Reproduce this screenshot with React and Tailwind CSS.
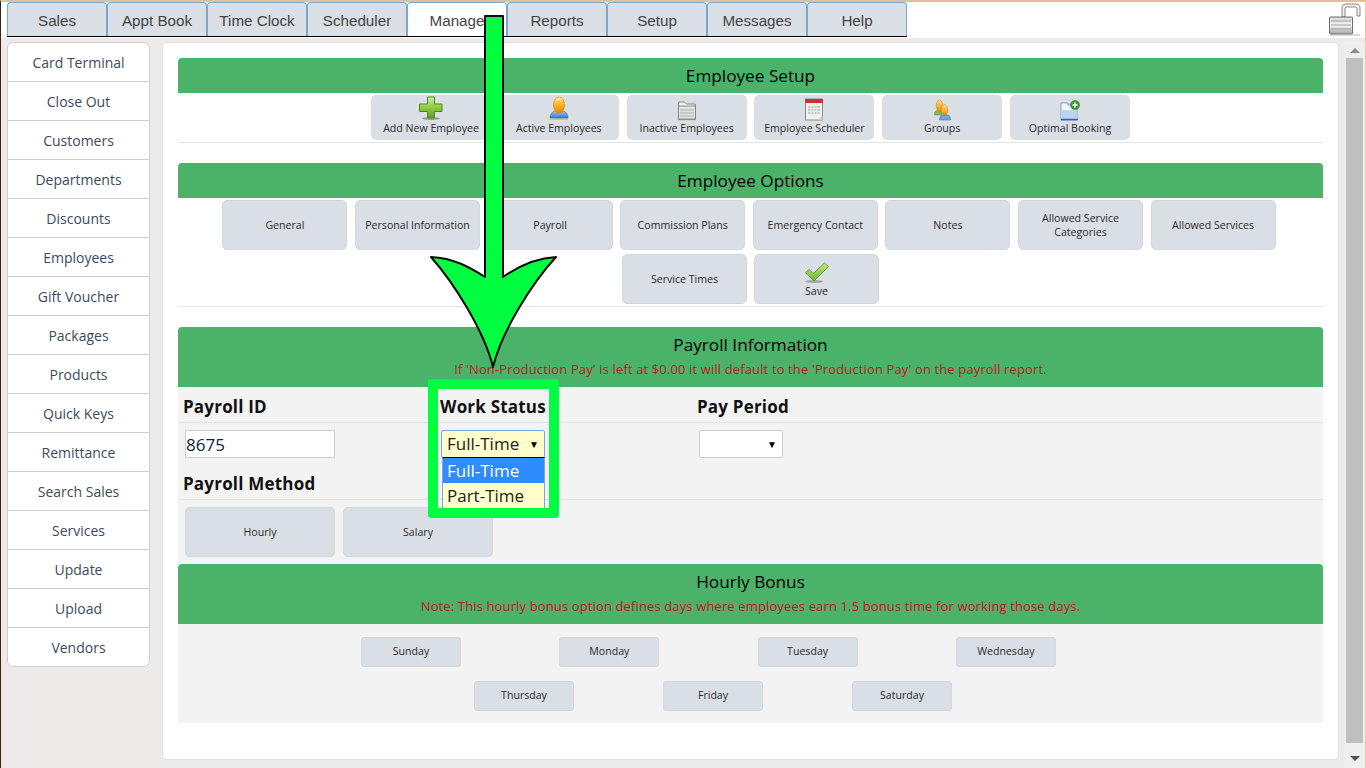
import React from 'react';

const tabs = ['Sales', 'Appt Book', 'Time Clock', 'Scheduler', 'Manage', 'Reports', 'Setup', 'Messages', 'Help'];
const sideItems = ['Card Terminal', 'Close Out', 'Customers', 'Departments', 'Discounts', 'Employees', 'Gift Voucher', 'Packages', 'Products', 'Quick Keys', 'Remittance', 'Search Sales', 'Services', 'Update', 'Upload', 'Vendors'];

const PlusIcon = () => (
  <svg width="26" height="25" viewBox="0 0 26 25">
    <defs>
      <linearGradient id="plusFill" x1="0" y1="0" x2="0" y2="1">
        <stop offset="0" stopColor="#d3ec8e" />
        <stop offset="0.55" stopColor="#8cc63f" />
        <stop offset="1" stopColor="#5e9e1e" />
      </linearGradient>
    </defs>
    <ellipse cx="13" cy="22.5" rx="9" ry="1.5" fill="#9a9a9a" />
    <path d="M9.5 1h7v7H24v7.5h-7.5V22h-7v-6.5H1.5V8h8z" fill="url(#plusFill)" stroke="#4d8a1b" />
  </svg>
);

const PersonIcon = () => (
  <svg width="20" height="25" viewBox="0 0 20 25">
    <defs>
      <linearGradient id="headFill" x1="0" y1="0" x2="0" y2="1">
        <stop offset="0" stopColor="#fff0a0" />
        <stop offset="0.5" stopColor="#ffb020" />
        <stop offset="1" stopColor="#f08000" />
      </linearGradient>
      <linearGradient id="bodyFill" x1="0" y1="0" x2="0" y2="1">
        <stop offset="0" stopColor="#9cc4f0" />
        <stop offset="1" stopColor="#3a78c8" />
      </linearGradient>
    </defs>
    <path d="M1 22c0-4 2-6 5-7h8c3 1 5 3 5 7z" fill="url(#bodyFill)" stroke="#3566a8" strokeWidth="0.6" />
    <ellipse cx="10" cy="9" rx="5.5" ry="8" fill="url(#headFill)" stroke="#d97a00" strokeWidth="0.6" />
    <rect x="1" y="22" width="18" height="1.5" fill="#a8a8a8" />
  </svg>
);

const FolderIcon = () => (
  <svg width="20" height="23" viewBox="0 0 20 23">
    <path d="M1.5 4h6l2 2h9v15h-17z" fill="#f4f4f4" stroke="#777" strokeWidth="0.8" />
    <path d="M1.5 8h17v13h-17z" fill="#e2e2e2" stroke="#777" strokeWidth="0.8" />
    <path d="M3 12h14M3 15h14M3 18h14" stroke="#b0b0b0" strokeWidth="1" />
    <rect x="1" y="21" width="18" height="1.2" fill="#8f8f8f" />
  </svg>
);

const CalendarIcon = () => (
  <svg width="20" height="23" viewBox="0 0 20 23">
    <rect x="1.5" y="1" width="17" height="21" fill="#f2f0ee" stroke="#777" strokeWidth="0.8" />
    <rect x="1" y="1" width="18" height="4" fill="#c8323a" />
    <path d="M4 8h12v8H4z" fill="#c9c9c9" />
    <path d="M4 10.5h12M4 13.5h12M7 8v8M10 8v8M13 8v8" stroke="#f4f4f4" strokeWidth="0.8" />
    <path d="M14 22l4.500-4.500V22z" fill="#cfcfcf" />
  </svg>
);

const GroupsIcon = () => (
  <svg width="17" height="22" viewBox="0 0 17 22">
    <defs>
      <linearGradient id="groupHead" x1="0" y1="0" x2="0" y2="1">
        <stop offset="0" stopColor="#ffe28a" />
        <stop offset="1" stopColor="#f08a00" />
      </linearGradient>
    </defs>
    <path d="M0.500 15c0-2 1.500-3.500 3-3.500h4V16H0.500z" fill="#82b94a" stroke="#5b8f2c" strokeWidth="0.5" />
    <ellipse cx="5.500" cy="6.500" rx="3.200" ry="5.500" fill="url(#groupHead)" stroke="#d97a00" strokeWidth="0.5" />
    <path d="M5.500 21c0-3 1.500-5 3-5h5c2 0 3 2 3 5z" fill="#6ea4e4" stroke="#3566a8" strokeWidth="0.5" />
    <ellipse cx="10.500" cy="11" rx="3.300" ry="5.500" fill="url(#groupHead)" stroke="#d97a00" strokeWidth="0.5" />
  </svg>
);

const BookingIcon = () => (
  <svg width="20" height="21" viewBox="0 0 20 21">
    <path d="M1 3h7v2h9v15H1z" fill="#f4f7fc" stroke="#6b8fc4" strokeWidth="0.8" />
    <path d="M1 10h16v9H1z" fill="#bcd4f2" />
    <path d="M1 19.500h17" stroke="#2f62b0" strokeWidth="1.500" />
    <circle cx="15" cy="5" r="4.600" fill="#3f9a3a" stroke="#2b7a28" strokeWidth="0.5" />
    <path d="M15 2.500v5M12.500 5h5" stroke="#ffffff" strokeWidth="1.400" />
  </svg>
);

const CheckIcon = () => (
  <svg width="26" height="22" viewBox="0 0 26 22">
    <defs>
      <linearGradient id="checkFill" x1="0" y1="0" x2="0" y2="1">
        <stop offset="0" stopColor="#c9e98e" />
        <stop offset="1" stopColor="#6ab52c" />
      </linearGradient>
    </defs>
    <ellipse cx="10" cy="19.500" rx="9" ry="1.500" fill="#a2a2a2" />
    <path d="M1.500 10.500l3.500-3 4.500 4L20.500 1l4 3.500-14.500 14.500z" fill="url(#checkFill)" stroke="#4f9a22" strokeWidth="0.9" />
  </svg>
);

const LockIcon = () => (
  <svg width="32" height="33" viewBox="0 0 32 33">
    <defs>
      <linearGradient id="lockFill" x1="0" y1="0" x2="0" y2="1">
        <stop offset="0" stopColor="#d8d8d8" />
        <stop offset="0.5" stopColor="#f4f4f4" />
        <stop offset="1" stopColor="#a6a6a6" />
      </linearGradient>
    </defs>
    <path d="M13 14V5c0-2.500 1.500-4 4-4h10c2.500 0 4 1.500 4 4v8h-3V6c0-1.500-.5-2-2-2h-8c-1.500 0-2 .5-2 2v8z" fill="#efefef" stroke="#6d6d6d" strokeWidth="0.8" />
    <rect x="0.500" y="14" width="23" height="17" rx="1" fill="url(#lockFill)" stroke="#6d6d6d" />
    <path d="M2 18h20M2 22h20M2 26h20" stroke="#9e9e9e" strokeWidth="1" />
    <rect x="1" y="31.500" width="30" height="1" fill="#b5b5b5" />
  </svg>
);

const ArrowDrawing = () => (
  <svg className="absolute left-[424px] top-[8px] z-20" width="136" height="364" viewBox="424 8 136 364">
    <path
      d="M484 14H502V275C515 266 532 256 555 255C532 280 501 328 492 365C483 328 452 280 430 255C453 256 470 266 484 275Z"
      fill="#00ff40"
      stroke="#0a0a0a"
      strokeWidth="2"
      strokeLinejoin="round"
    />
  </svg>
);

const IconButton = ({ icon, label }) => (
  <button className="flex h-[45px] w-[120px] flex-col items-center justify-end rounded-[5px] bg-[#dadee5] pb-[4px] text-[10.6px] leading-[15px] text-[#2b2b2b]">
    {icon}
    <span>{label}</span>
  </button>
);

const OptionButton = ({ children, w = 'w-[125px]' }) => (
  <button className={`flex h-[50px] ${w} items-center justify-center rounded-[5px] border border-[#d3d7de] bg-[#dadee5] px-1 text-[10.6px] leading-[14px] text-[#2b2b2b]`}>
    {children}
  </button>
);

const DayButton = ({ children }) => (
  <button className="h-[30px] w-[100px] rounded-[3px] border border-[#d3d7de] bg-[#dadee5] text-[10.6px] text-[#2b2b2b]">
    {children}
  </button>
);

const GreenHeader = ({ title, note }) => (
  <div className={`flex flex-col items-center rounded-t-[4px] bg-[#4bb26a] text-black ${note ? 'h-[60px] pt-[6px]' : 'h-[35px] pt-[6px]'}`}>
    <div className="text-[17.2px] leading-[23px]">{title}</div>
    {note && <div className="mt-[5px] text-[13px] leading-[16px] tracking-[0.13px] text-[#c8141c]">{note}</div>}
  </div>
);

export default function App() {
  return (
    <div className="relative flex h-[768px] w-[1366px] flex-col overflow-hidden border-t-2 border-r border-l border-t-[#e5c097] border-r-[#efc79c] border-l-[#4a1c10] bg-[#ecebe9] font-['Open_Sans',sans-serif]">
      {/* Top tabs */}
      <div className="flex h-[36px] justify-between bg-white pl-[6px] pr-[4px]">
        <div className="flex h-[35px] border-b border-black font-['Liberation_Sans',sans-serif] text-[15.2px] text-[#444]">
          {tabs.map((tab) => (
            <div
              key={tab}
              className={`flex h-[34px] w-[100px] items-center justify-center rounded-t-[4px] border-x border-t border-[#7ba7cf] pt-[3px] ${tab === 'Manage' ? 'bg-white' : 'bg-[#dadee5]'}`}
            >
              {tab}
            </div>
          ))}
        </div>
        <div className="pt-[1px]">
          <LockIcon />
        </div>
      </div>

      <div className="flex flex-1 pl-[6px] pt-[4px]">
        {/* Sidebar */}
        <div className="h-[625px] w-[143px] overflow-hidden rounded-[6px] border border-[#cfcfcf] bg-white text-[14px] text-[#3d4a5c]">
          {sideItems.map((item, i) => (
            <div key={item} className={`flex items-center justify-center ${i > 0 ? 'h-[39px] border-t border-[#cfcfcf]' : 'h-[38px]'}`}>
              {item}
            </div>
          ))}
        </div>

        {/* Main panel */}
        <div className="ml-[12px] h-[718px] w-[1177px] rounded-[5px] border border-[#e2e2e2] bg-white px-[15px] pt-[15px]">
          <GreenHeader title="Employee Setup" />
          <div className="flex justify-center gap-[7.8px] border-b border-[#e4e4e4] pb-[2px] pt-[2px]">
            <IconButton icon={<PlusIcon />} label="Add New Employee" />
            <IconButton icon={<PersonIcon />} label="Active Employees" />
            <IconButton icon={<FolderIcon />} label="Inactive Employees" />
            <IconButton icon={<CalendarIcon />} label="Employee Scheduler" />
            <IconButton icon={<GroupsIcon />} label="Groups" />
            <IconButton icon={<BookingIcon />} label="Optimal Booking" />
          </div>

          <div className="mt-[20px]">
            <GreenHeader title="Employee Options" />
            <div className="flex flex-col items-center gap-[4px] border-b border-[#e4e4e4] pb-[2px] pr-[3px] pt-[2px]">
              <div className="flex gap-[7.6px]">
                <OptionButton>General</OptionButton>
                <OptionButton>Personal Information</OptionButton>
                <OptionButton>Payroll</OptionButton>
                <OptionButton>Commission Plans</OptionButton>
                <OptionButton>Emergency Contact</OptionButton>
                <OptionButton>Notes</OptionButton>
                <OptionButton>Allowed Service Categories</OptionButton>
                <OptionButton>Allowed Services</OptionButton>
              </div>
              <div className="flex gap-[7px] pl-[3px]">
                <OptionButton>Service Times</OptionButton>
                <button className="flex h-[50px] w-[125px] flex-col items-center justify-end rounded-[5px] border border-[#d3d7de] bg-[#dadee5] pb-[5px] text-[10.6px] leading-[14px] text-[#2b2b2b]">
                  <CheckIcon />
                  <span>Save</span>
                </button>
              </div>
            </div>
          </div>

          <div className="mt-[20px]">
            <GreenHeader title="Payroll Information" note="If 'Non-Production Pay' is left at $0.00 it will default to the 'Production Pay' on the payroll report." />
            <div className="h-[177px] bg-[#f3f3f3]">
              <div className="flex h-[36px] items-end border-b border-[#e2e2e2] pb-[3px] pl-[5px] text-[17px] font-bold leading-[24px] tracking-[0.2px] text-[#111]">
                <div className="w-[257px]">Payroll ID</div>
                <div className="w-[257px]">Work Status</div>
                <div>Pay Period</div>
              </div>
              <div className="flex h-[41px] items-start pl-[7px] pt-[7px]">
                <input
                  readOnly
                  value="8675"
                  className="h-[28px] w-[150px] border border-[#cfcfcf] bg-white px-0 text-[17px] text-[#12233a] outline-none"
                />
                <div className="relative ml-[106px] w-[104px]">
                  <div className="flex h-[28px] items-center justify-between rounded-[2px] border border-[#7ba3e8] bg-[#ffffcc] pl-[5px] pr-[5px] text-[17px] text-[#222]">
                    <span>Full-Time</span>
                    <span className="text-[10px] text-black">▼</span>
                  </div>
                  <div className="absolute left-[1px] top-[27px] z-10 w-[103px] border border-[#7ba3e8] border-t-black bg-[#ffffcc] text-[17px] leading-[25px] text-[#222]">
                    <div className="bg-[#2e8cff] pl-[4px] text-white">Full-Time</div>
                    <div className="pl-[4px]">Part-Time</div>
                  </div>
                </div>
                <div className="ml-[154px] flex h-[28px] w-[84px] items-center justify-end rounded-[2px] border border-[#cfcfcf] bg-white pr-[5px] text-[10px] text-black">▼</div>
              </div>
              <div className="flex h-[36px] items-end border-b border-[#e2e2e2] pb-[3px] pl-[5px] text-[17px] font-bold leading-[24px] tracking-[0.2px] text-[#111]">
                Payroll Method
              </div>
              <div className="flex gap-[8px] pl-[7px] pt-[7px]">
                <OptionButton w="w-[150px]">Hourly</OptionButton>
                <OptionButton w="w-[150px]">Salary</OptionButton>
              </div>
            </div>
          </div>

          <GreenHeader title="Hourly Bonus" note="Note: This hourly bonus option defines days where employees earn 1.5 bonus time for working those days." />
          <div className="h-[99px] bg-[#f3f3f3] pt-[13px]">
            <div className="ml-[183px] flex gap-[98.3px]">
              <DayButton>Sunday</DayButton>
              <DayButton>Monday</DayButton>
              <DayButton>Tuesday</DayButton>
              <DayButton>Wednesday</DayButton>
            </div>
            <div className="ml-[296px] mt-[14px] flex gap-[89px]">
              <DayButton>Thursday</DayButton>
              <DayButton>Friday</DayButton>
              <DayButton>Saturday</DayButton>
            </div>
          </div>
        </div>

        {/* Scrollbar */}
        <div className="ml-[5px] flex w-[21px] flex-col items-center bg-[#eeeeee] pt-[6px]">
          <div className="h-0 w-0 border-x-[5px] border-b-[5px] border-x-transparent border-b-[#8c8c8c]" />
          <div className="mt-[5px] h-[685px] w-[17px] bg-[#bfbfbf]" />
          <div className="mt-[13px] h-0 w-0 border-x-[5px] border-t-[5px] border-x-transparent border-t-[#505050]" />
        </div>
      </div>

      {/* Annotation over the page */}
      <ArrowDrawing />
      <div className="absolute left-[427px] top-[377px] z-20 h-[139px] w-[131px] rounded-[3px] border-[10px] border-[#00ff40]" />
    </div>
  );
}
